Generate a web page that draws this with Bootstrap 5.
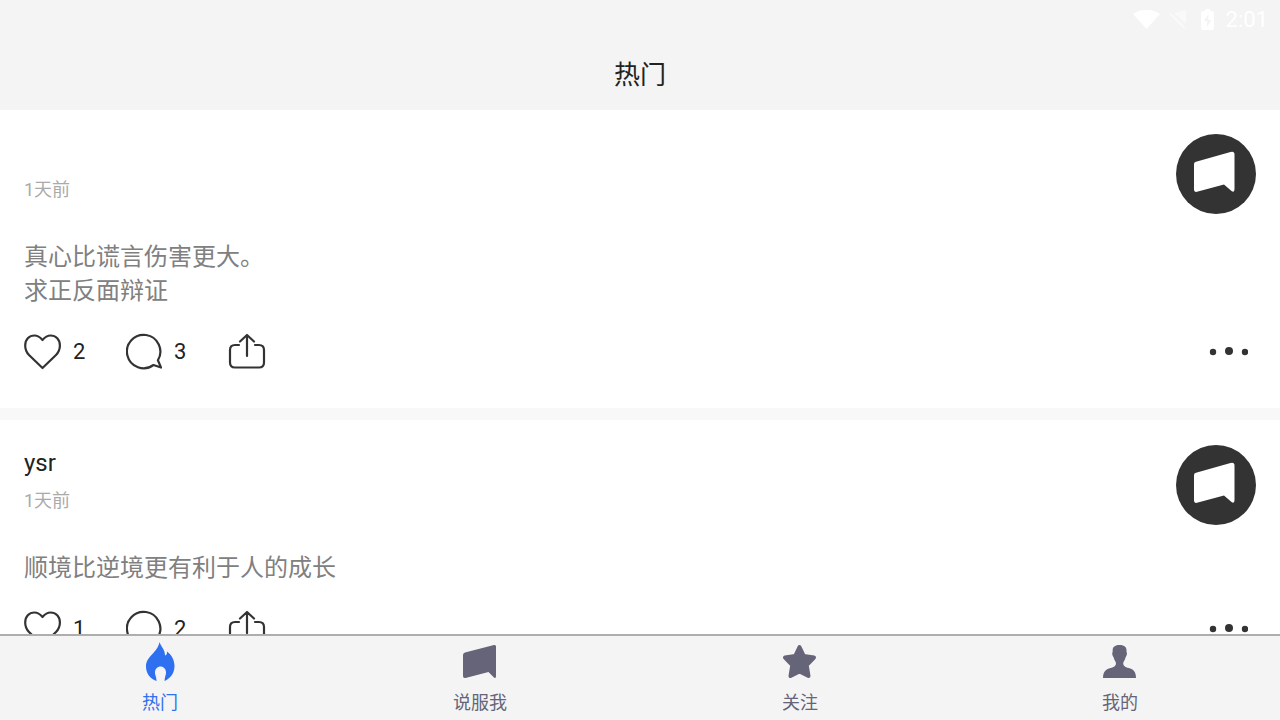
<!DOCTYPE html>
<html lang="zh-CN">
<head>
<meta charset="utf-8">
<meta name="viewport" content="width=device-width, initial-scale=1">
<title>热门</title>
<link href="https://cdn.jsdelivr.net/npm/bootstrap@5.3.0/dist/css/bootstrap.min.css" rel="stylesheet">
<style>
body { font-family: Roboto, "Noto Sans CJK SC", sans-serif; color: #222; background: #fff; }
.bar { background: #f4f4f4; }
.status { height: 40px; color: #fff; font-size: 22px; line-height: 40px; padding-right: 12px; }
.page-title { height: 70px; font-size: 26px; line-height: 70px; font-weight: 400; }
.post { padding: 24px 24px 38px; border-bottom: 12px solid #f8f8f8; }
.post + .post { padding-top: 25px; }
.post-name { font-size: 24px; line-height: 36px; min-height: 36px; font-weight: 400; }
.post-time { font-size: 18px; line-height: 40px; color: #aaa; }
.post-text { font-size: 24px; line-height: 34px; color: #808080; margin: 26px 0 24px; }
.act { height: 38px; font-size: 22px; line-height: 38px; color: #222; background: none; border: 0; padding: 0; }
.act-slot { width: 102px; }
.act-gap { gap: 12px; }
.act-count { padding-top: 2px; }
.line-icon { fill: none; stroke: #333; stroke-width: 2.2; stroke-linecap: round; stroke-linejoin: round; }
.tabs { border-top: 2px solid #aeaeae; height: 86px; }
.tab { color: #656478; font-size: 18px; line-height: 26px; padding-top: 6px; gap: 8px; }
.tab.active { color: #2f70f0; }
</style>
</head>
<body>
<svg class="d-none" xmlns="http://www.w3.org/2000/svg">
  <symbol id="avatar" viewBox="0 0 80 80"><circle cx="40" cy="40" r="40" fill="#333"/><path d="M20 27.800 54.500 18q4-1 4 2.500V55q0 4-3 2L48 50.500 21 57.800q-3 .7-3-2V30q0-1.700 2-2.200Z" fill="#fff"/></symbol>
  <symbol id="heart" viewBox="0 0 38 38"><path d="M18.500 8C15.500 4.500 13.500 3.500 10.500 3.500 5 3.500 1.200 7.500 1.200 13.500c0 4 1.300 7 3.800 9.500L18.500 36 32 23c2.500-2.500 3.900-5.500 3.900-9.500 0-6-3.900-10-9.400-10-3 0-5 1-8 4.500Z"/></symbol>
  <symbol id="bubble" viewBox="0 0 38 38"><path d="M31.900 28.200A16.700 16.700 0 1 0 27.500 33L35 35.500Z"/></symbol>
  <symbol id="share" viewBox="0 0 38 38"><path d="M11 13H7q-5 0-5 5v12.500q0 5 5 5h24q5 0 5-5V18q0-5-5-5h-4M19 24V3M12 9.500 19 3l7 6.500"/></symbol>
  <symbol id="dots" viewBox="0 0 40 14"><circle cx="5" cy="8" r="3.200"/><circle cx="21" cy="7" r="4"/><circle cx="37" cy="8" r="3.200"/></symbol>
</svg>
<div class="d-flex flex-column vh-100 overflow-hidden">
  <header class="bar flex-shrink-0">
    <div class="status d-flex justify-content-end align-items-center">
      <svg width="27" height="20" viewBox="0 0 27 20" fill="#fff" aria-hidden="true"><path d="M0 4Q13.500-5 27 4L13.500 19Z"/></svg>
      <svg class="ms-2" width="20" height="20" viewBox="0 0 20 20" fill="#f9f9f9" aria-hidden="true"><path d="M2 2v3l13 13h3ZM6 3l12-3v14Z"/></svg>
      <svg class="ms-2 me-2" width="22" height="22" viewBox="0 0 22 22" fill="#fff" aria-hidden="true"><path fill-rule="evenodd" d="M9 0h5v2h2q2 0 2 2v15q0 2-2 2H7q-2 0-2-2V4q0-2 2-2h2ZM12.500 5 8 12h3v6l4.500-7h-3Z"/></svg>
      <span>2:01</span>
    </div>
    <h1 class="page-title text-center mb-0">热门</h1>
  </header>

  <main class="flex-fill overflow-hidden">
    <article class="post">
      <div class="d-flex justify-content-between">
        <div>
          <h2 class="post-name mb-0"></h2>
          <div class="post-time">1天前</div>
        </div>
        <svg width="80" height="80" role="img" aria-label="头像"><use href="#avatar"/></svg>
      </div>
      <p class="post-text">真心比谎言伤害更大。<br>求正反面辩证</p>
      <div class="d-flex align-items-center">
        <div class="act-slot"><button type="button" class="act act-gap d-flex align-items-center"><svg class="line-icon" width="37" height="38" viewBox="0 0 37 38"><use href="#heart" width="38" height="38"/></svg><span class="act-count">2</span></button></div>
        <div class="act-slot"><button type="button" class="act act-gap d-flex align-items-center"><svg class="line-icon" width="36" height="38" viewBox="0 0 36 38"><use href="#bubble" width="38" height="38"/></svg><span class="act-count">3</span></button></div>
        <button type="button" class="act d-flex" aria-label="分享"><svg class="line-icon" width="38" height="38"><use href="#share"/></svg></button>
        <button type="button" class="act d-flex align-items-center ms-auto me-1" aria-label="更多"><svg width="44" height="14" viewBox="0 0 44 14" fill="#333"><use href="#dots" width="40" height="14"/></svg></button>
      </div>
    </article>

    <article class="post">
      <div class="d-flex justify-content-between">
        <div>
          <h2 class="post-name mb-0">ysr</h2>
          <div class="post-time">1天前</div>
        </div>
        <svg width="80" height="80" role="img" aria-label="头像"><use href="#avatar"/></svg>
      </div>
      <p class="post-text">顺境比逆境更有利于人的成长</p>
      <div class="d-flex align-items-center">
        <div class="act-slot"><button type="button" class="act act-gap d-flex align-items-center"><svg class="line-icon" width="37" height="38" viewBox="0 0 37 38"><use href="#heart" width="38" height="38"/></svg><span class="act-count">1</span></button></div>
        <div class="act-slot"><button type="button" class="act act-gap d-flex align-items-center"><svg class="line-icon" width="36" height="38" viewBox="0 0 36 38"><use href="#bubble" width="38" height="38"/></svg><span class="act-count">2</span></button></div>
        <button type="button" class="act d-flex" aria-label="分享"><svg class="line-icon" width="38" height="38"><use href="#share"/></svg></button>
        <button type="button" class="act d-flex align-items-center ms-auto me-1" aria-label="更多"><svg width="44" height="14" viewBox="0 0 44 14" fill="#333"><use href="#dots" width="40" height="14"/></svg></button>
      </div>
    </article>
  </main>

  <nav class="bar tabs d-flex flex-shrink-0">
    <a href="#" class="tab active col-3 d-flex flex-column align-items-center text-decoration-none" aria-current="page">
      <svg width="40" height="40" viewBox="0 0 40 40" fill="currentColor" aria-hidden="true"><path d="M19.500 0C21 5 25 7 25 13.500c1.800-.5 2.200-2 2-4C32 13 34.500 18.500 34.500 24c0 7-4 12.500-10 15 .5-5 1.500-6 1.500-8.500 0-3.500-2.500-6-5.500-6s-5.500 2.500-5.500 6c0 3 1.500 4 1.500 8.500C10 37 6 31 6 24.500 6 14 17.500 11 19.500 0Z"/></svg>
      <span>热门</span>
    </a>
    <a href="#" class="tab col-3 d-flex flex-column align-items-center text-decoration-none">
      <svg width="40" height="40" viewBox="0 0 40 40" fill="currentColor" aria-hidden="true"><path d="M5 10.500 34 3q2-.5 2 1.500V34q0 3-2 1.500L28.500 30 5.500 36Q3 36.500 3 34V13q0-2 2-2.500Z"/></svg>
      <span>说服我</span>
    </a>
    <a href="#" class="tab col-3 d-flex flex-column align-items-center text-decoration-none">
      <svg width="40" height="40" viewBox="0 0 40 40" fill="currentColor" stroke="currentColor" stroke-width="4" stroke-linejoin="round" aria-hidden="true"><path d="m19.500 5 4.300 9 10.200 1.500-7.300 7.500 1.800 11-9-4.500-9 4.500 1.800-11L5 15.500 15.200 14Z"/></svg>
      <span>关注</span>
    </a>
    <a href="#" class="tab col-3 d-flex flex-column align-items-center text-decoration-none">
      <svg width="40" height="40" viewBox="0 0 40 40" fill="currentColor" aria-hidden="true"><path d="M19.500 3c5 0 7.500 2 7 7 .8.500.5 4-.8 5-.7 3-2 4-2.500 6 0 3.500 3 4.500 7 5.500 4 1.500 5.800 4 5.800 9.500H3c0-5.500 2-8 6-9.500 4-1 7-2 7-5.500-.5-2-1.800-3-2.500-6-1.300-1-1.600-4.500-.8-5-.5-5 1.800-7 6.800-7Z"/></svg>
      <span>我的</span>
    </a>
  </nav>
</div>
<script src="https://cdn.jsdelivr.net/npm/bootstrap@5.3.0/dist/js/bootstrap.bundle.min.js"></script>
</body>
</html>
